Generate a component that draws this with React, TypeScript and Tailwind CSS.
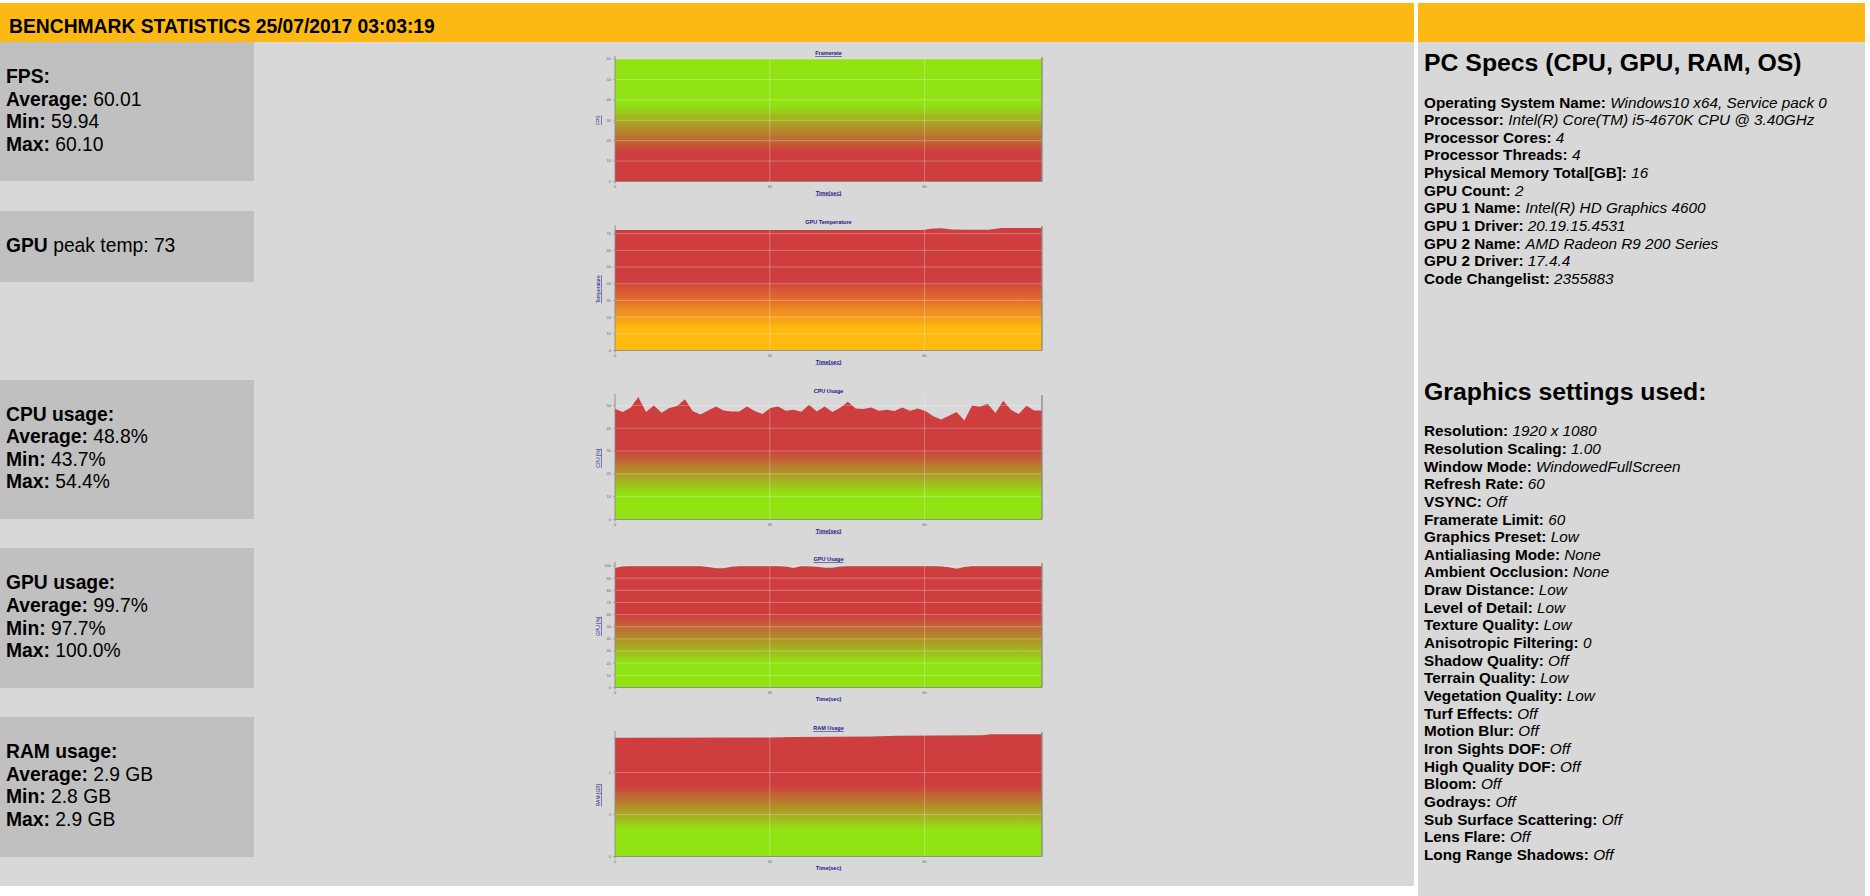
import React from 'react';

type Pt = [number, number];

interface ChartProps {
  id: string;
  title: string;
  titleLine?: boolean;
  timeLine?: boolean;
  yLabel: string;
  yMax: number;
  ticks: number[];
  points: Pt[];
  top: string;
  bottom: string;
  from: number;
  to: number;
}

const RED = '#cf3e3e';
const GREEN = '#92e313';
const YELLOW = '#ffba0f';
const NAVY = '#1b1b86';

// plot area inside the 480x169 canvas
const X0 = 30;
const PW = 427;
const X1 = X0 + PW;
const Y0 = 17;
const PH = 122.5;
const Y1 = Y0 + PH;
const SPAN = 82.76; // seconds covered by the x axis

const spread = (vals: number[]): Pt[] => vals.map((v, i) => [i / (vals.length - 1), v]);

function Chart({ id, title, titleLine, timeLine, yLabel, yMax, ticks, points, top, bottom, from, to }: ChartProps) {
  const px = (f: number) => X0 + f * PW;
  const py = (v: number) => Y1 - (Math.min(v, yMax) / yMax) * PH;
  const d =
    `M${X0},${Y1} ` +
    points.map(([f, v]) => `L${px(f).toFixed(2)},${py(v).toFixed(2)}`).join(' ') +
    ` L${X1},${Y1} Z`;
  const xTicks = [0, 30, 60];

  return (
    <svg width={480} height={169} viewBox="0 0 480 169" className="ml-[331px] shrink-0" fontFamily="'Liberation Sans', Arial, sans-serif">
      <defs>
        <linearGradient id={id} gradientUnits="userSpaceOnUse" x1={0} y1={Y0} x2={0} y2={Y1}>
          <stop offset={0} stopColor={top} />
          <stop offset={from} stopColor={top} />
          <stop offset={to} stopColor={bottom} />
          <stop offset={1} stopColor={bottom} />
        </linearGradient>
      </defs>

      <text
        x={X0 + PW / 2}
        y={Y0 - 4}
        fontSize={5.5}
        fontWeight={700}
        fill={NAVY}
        textAnchor="middle"
        style={{ textDecoration: titleLine ? 'underline' : 'none' }}
      >
        {title}
      </text>

      <path d={d} fill={`url(#${id})`} />

      {ticks.filter(t => t > 0).map(t => (
        <line key={t} x1={X0} x2={X1} y1={py(t)} y2={py(t)} stroke="#ffffff" strokeOpacity={0.35} strokeWidth={0.8} />
      ))}
      {xTicks.slice(1).map(t => (
        <line key={t} x1={px(t / SPAN)} x2={px(t / SPAN)} y1={Y0} y2={Y1} stroke="#ffffff" strokeOpacity={0.35} strokeWidth={0.8} />
      ))}

      <line x1={X0} x2={X0} y1={Y0 - 3} y2={Y1 + 2} stroke="#8a8a8a" strokeWidth={0.9} />
      <line x1={X0} x2={X1} y1={Y1} y2={Y1} stroke="#8a8a8a" strokeWidth={0.9} />
      <line x1={X1} x2={X1} y1={Y0 - 2} y2={Y1} stroke="#8d8d8d" strokeWidth={1.4} />

      {ticks.map(t => (
        <g key={t}>
          <line x1={X0 - 2} x2={X0} y1={py(t)} y2={py(t)} stroke="#8a8a8a" strokeWidth={0.6} />
          <text x={X0 - 4} y={py(t) + 1.4} fontSize={4} fill="#666" textAnchor="end">
            {t}
          </text>
        </g>
      ))}
      {xTicks.map(t => (
        <text key={t} x={px(t / SPAN)} y={Y1 + 6} fontSize={4} fill="#666" textAnchor="middle">
          {t}
        </text>
      ))}

      <text
        transform={`translate(${X0 - 15},${Y0 + PH / 2}) rotate(-90)`}
        fontSize={5}
        fill={NAVY}
        textAnchor="middle"
        style={{ textDecoration: 'underline' }}
      >
        {yLabel}
      </text>
      <text
        x={X0 + PW / 2}
        y={Y1 + 13}
        fontSize={5.5}
        fontWeight={700}
        fill={NAVY}
        textAnchor="middle"
        style={{ textDecoration: timeLine ? 'underline' : 'none' }}
      >
        Time(sec)
      </text>
    </svg>
  );
}

const CPU = [
  48.55, 47.08, 48.99, 53.7, 47.08, 50.02, 46.79, 48.85, 49.73, 52.67, 47.52, 46.05, 47.82, 49.58,
  47.82, 47.37, 47.37, 49.58, 47.52, 46.2, 48.85, 49.58, 47.67, 48.11, 47.23, 50.32, 47.37, 49.58,
  47.08, 48.99, 51.64, 48.7, 48.4, 49.14, 47.67, 48.11, 47.52, 49.14, 47.67, 48.7, 47.52, 45.31,
  43.84, 45.46, 47.08, 43.4, 50.02, 49.43, 50.76, 46.64, 52.08, 48.11, 46.2, 49.88, 47.82, 47.82,
];

const GPU = [
  98.4, 99.8, 100, 100, 99.9, 100, 100, 99.9, 100, 100, 100, 99.9, 99.2, 98.2, 98.1, 99.3, 99.9, 100,
  100, 99.9, 100, 100, 99.6, 98.3, 99.9, 99.7, 99.4, 98.6, 98.5, 99.6, 99.9, 100, 100, 99.9, 100, 100,
  100, 99.9, 100, 100, 99.9, 100, 99.8, 99.0, 97.7, 99.2, 99.9, 100, 100, 99.9, 100, 100, 99.9, 100,
  100, 100,
];

const TEMP: Pt[] = [
  [0, 72.2], [0.72, 72.2], [0.745, 73.1], [0.765, 73.3], [0.79, 72.5], [0.82, 72.3], [0.875, 72.3],
  [0.905, 73.4], [1, 73.4],
];

const RAM: Pt[] = [
  [0, 2.83], [0.36, 2.835], [0.42, 2.85], [0.6, 2.86], [0.66, 2.88], [0.86, 2.89], [0.88, 2.915], [1, 2.915],
];

const FPS: Pt[] = [
  [0, 60], [1, 60],
];

const SPECS: [string, string][] = [
  ['Operating System Name', 'Windows10 x64, Service pack 0'],
  ['Processor', 'Intel(R) Core(TM) i5-4670K CPU @ 3.40GHz'],
  ['Processor Cores', '4'],
  ['Processor Threads', '4'],
  ['Physical Memory Total[GB]', '16'],
  ['GPU Count', '2'],
  ['GPU 1 Name', 'Intel(R) HD Graphics 4600'],
  ['GPU 1 Driver', '20.19.15.4531'],
  ['GPU 2 Name', 'AMD Radeon R9 200 Series'],
  ['GPU 2 Driver', '17.4.4'],
  ['Code Changelist', '2355883'],
];

const SETTINGS: [string, string][] = [
  ['Resolution', '1920 x 1080'],
  ['Resolution Scaling', '1.00'],
  ['Window Mode', 'WindowedFullScreen'],
  ['Refresh Rate', '60'],
  ['VSYNC', 'Off'],
  ['Framerate Limit', '60'],
  ['Graphics Preset', 'Low'],
  ['Antialiasing Mode', 'None'],
  ['Ambient Occlusion', 'None'],
  ['Draw Distance', 'Low'],
  ['Level of Detail', 'Low'],
  ['Texture Quality', 'Low'],
  ['Anisotropic Filtering', '0'],
  ['Shadow Quality', 'Off'],
  ['Terrain Quality', 'Low'],
  ['Vegetation Quality', 'Low'],
  ['Turf Effects', 'Off'],
  ['Motion Blur', 'Off'],
  ['Iron Sights DOF', 'Off'],
  ['High Quality DOF', 'Off'],
  ['Bloom', 'Off'],
  ['Godrays', 'Off'],
  ['Sub Surface Scattering', 'Off'],
  ['Lens Flare', 'Off'],
  ['Long Range Shadows', 'Off'],
];

function StatBox({ children }: { children: React.ReactNode }) {
  return (
    <div className="w-[254px] shrink-0 bg-[#c0c0c0] px-[6px] pt-[24px] pb-[25px] text-[19.3px] leading-[22.6px]">
      {children}
    </div>
  );
}

function Stat({ label, value }: { label: string; value: string }) {
  return (
    <div>
      <b>{label}:</b> {value}
    </div>
  );
}

function Row({ children }: { children: React.ReactNode }) {
  return <div className="flex h-[168.8px] items-start">{children}</div>;
}

function InfoList({ items }: { items: [string, string][] }) {
  return (
    <div className="text-[15.3px] leading-[17.65px]">
      {items.map(([k, v]) => (
        <div key={k}>
          <b>{k}:</b> <i>{v}</i>
        </div>
      ))}
    </div>
  );
}

export default function App() {
  return (
    <div className="flex h-[896px] w-[1870px] gap-[4px] overflow-hidden bg-white pt-[3px] font-['Liberation_Sans',Arial,sans-serif] text-black">
      <div className="flex w-[1414px] shrink-0 flex-col self-start">
        <div className="h-[39px] bg-[#fdb913] pt-[13px] pl-[9px] text-[19.3px] leading-[22px] font-bold">
          BENCHMARK STATISTICS 25/07/2017 03:03:19
        </div>
        <div className="bg-[#d8d8d8]">
          <Row>
            <StatBox>
              <div className="font-bold">FPS:</div>
              <Stat label="Average" value="60.01" />
              <Stat label="Min" value="59.94" />
              <Stat label="Max" value="60.10" />
            </StatBox>
            <Chart id="g-fps" title="Framerate" titleLine timeLine yLabel="FPS" yMax={60} ticks={[0, 10, 20, 30, 40, 50, 60]} points={FPS} top={GREEN} bottom={RED} from={0.37} to={0.76} />
          </Row>
          <Row>
            <StatBox>
              <div>
                <b>GPU</b> peak temp: 73
              </div>
            </StatBox>
            <Chart id="g-temp" title="GPU Temperature" timeLine yLabel="Temperature" yMax={73.4} ticks={[0, 10, 20, 30, 40, 50, 60, 70]} points={TEMP} top={RED} bottom={YELLOW} from={0.43} to={0.82} />
          </Row>
          <Row>
            <StatBox>
              <div className="font-bold">CPU usage:</div>
              <Stat label="Average" value="48.8%" />
              <Stat label="Min" value="43.7%" />
              <Stat label="Max" value="54.4%" />
            </StatBox>
            <Chart id="g-cpu" title="CPU Usage" timeLine yLabel="CPU [%]" yMax={53.7} ticks={[0, 10, 20, 30, 40, 50]} points={spread(CPU)} top={RED} bottom={GREEN} from={0.43} to={0.79} />
          </Row>
          <Row>
            <StatBox>
              <div className="font-bold">GPU usage:</div>
              <Stat label="Average" value="99.7%" />
              <Stat label="Min" value="97.7%" />
              <Stat label="Max" value="100.0%" />
            </StatBox>
            <Chart id="g-gpu" title="GPU Usage" titleLine yLabel="GPU [%]" yMax={100.8} ticks={[0, 10, 20, 30, 40, 50, 60, 70, 80, 90, 100]} points={spread(GPU)} top={RED} bottom={GREEN} from={0.41} to={0.8} />
          </Row>
          <Row>
            <StatBox>
              <div className="font-bold">RAM usage:</div>
              <Stat label="Average" value="2.9 GB" />
              <Stat label="Min" value="2.8 GB" />
              <Stat label="Max" value="2.9 GB" />
            </StatBox>
            <Chart id="g-ram" title="RAM Usage" titleLine yLabel="RAM [GB]" yMax={2.92} ticks={[0, 1, 2]} points={RAM} top={RED} bottom={GREEN} from={0.42} to={0.78} />
          </Row>
        </div>
      </div>

      <div className="flex w-[447px] shrink-0 flex-col">
        <div className="h-[39px] bg-[#fdb913]" />
        <div className="flex-1 bg-[#d8d8d8] pt-[7px] pl-[6px]">
          <h2 className="text-[24.8px] leading-[28.5px] font-bold">PC Specs (CPU, GPU, RAM, OS)</h2>
          <div className="mt-[16px]">
            <InfoList items={SPECS} />
          </div>
          <h2 className="mt-[90px] text-[24.8px] leading-[28.5px] font-bold">Graphics settings used:</h2>
          <div className="mt-[16px]">
            <InfoList items={SETTINGS} />
          </div>
        </div>
      </div>
    </div>
  );
}
